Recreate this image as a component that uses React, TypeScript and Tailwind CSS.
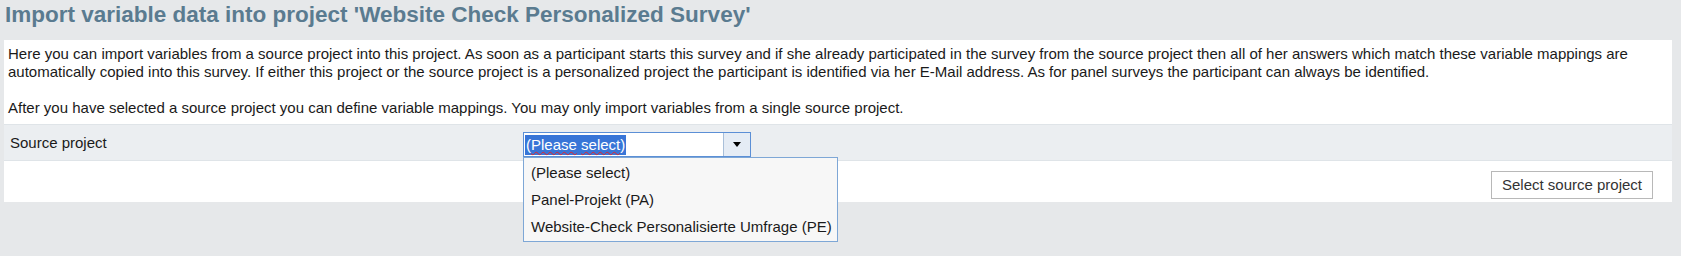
import { useState } from "react";

const options = ["(Please select)", "Panel-Projekt (PA)", "Website-Check Personalisierte Umfrage (PE)"];

const spell = "underline decoration-[#e3262b] decoration-wavy decoration-1 underline-offset-[1px]";

export default function App() {
  const [open] = useState(true);

  return (
    <div className="min-h-[256px] bg-[#e6e8ea] font-['Liberation_Sans',Arial,sans-serif] text-[15px] text-[#1a1a1a]">
      <h1 className="h-[40px] pl-[5px] text-[22.5px] leading-[30px] font-bold text-[#5a7b90]">
        Import variable data into project 'Website Check Personalized Survey'
      </h1>

      <div className="ml-[4px] w-[1668px] bg-white">
        {/* Intro text */}
        <div className="px-[4px] pt-[5px] pb-[7px] leading-[18px]">
          <p>
            Here you can import variables from a source project into this project. As soon as a participant starts this survey and if she already participated in the survey from the source project then all of her answers which match these variable mappings are automatically copied into this survey. If either this project or the source project is a personalized project the participant is identified via her E-Mail address. As for panel surveys the participant can always be identified.
          </p>
          <br />
          <p>After you have selected a source project you can define variable mappings. You may only import variables from a single source project.</p>
        </div>

        {/* Source project row */}
        <div className="grid h-[37px] grid-cols-[519px_1fr] border-y border-[#dfe4e8] bg-[#ebeef1]">
          <div className="self-center pl-[6px] leading-[18px]">Source project</div>
          <div className="relative mt-[7px] w-[228px] self-start">
            <div className="flex h-[25px] border border-[#5b8fd6] bg-white">
              <div className="flex flex-1 items-center pl-[1px]">
                <span className="bg-[#3875d7] px-[1px] leading-[20px] text-white">
                  (<span className={spell}>Please</span> <span className={spell}>select</span>)
                </span>
              </div>
              <div className="flex w-[27px] items-center justify-center border-l border-[#a9bfd9] bg-[#e5ecf5]">
                <div className="h-0 w-0 border-x-[4.5px] border-t-[5px] border-x-transparent border-t-black" />
              </div>
            </div>
            {open && (
              <div className="absolute left-0 top-full z-10 w-[315px] border border-[#7ea7d6] bg-[#f7f7f7] py-[1px]">
                {options.map((o) => (
                  <div key={o} className="h-[27px] pl-[7px] leading-[27px] whitespace-nowrap">
                    {o}
                  </div>
                ))}
              </div>
            )}
          </div>
        </div>

        {/* Actions */}
        <div className="flex h-[41px] justify-end pr-[19px] pt-[10px]">
          <button className="h-[28px] w-[162px] border border-[#b8b8b8] bg-white text-[15px] text-[#333]">
            Select source project
          </button>
        </div>
      </div>
    </div>
  );
}
